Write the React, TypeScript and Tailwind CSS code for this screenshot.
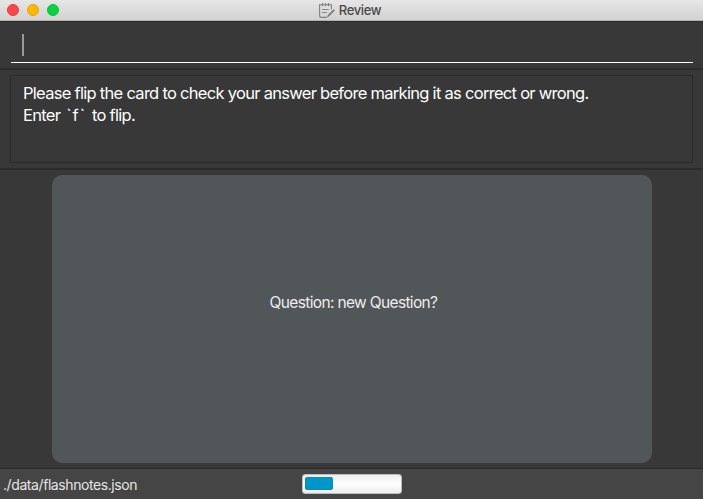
function NotepadIcon() {
  return (
    <svg
      className="h-[17px] w-[17px] shrink-0"
      viewBox="0 0 17 17"
      fill="none"
      stroke="#808080"
      strokeWidth="1.1"
    >
      <path d="M8.8 15.4H3.2C2 15.4 1.6 14.8 1.6 13.7V2.8H13.4V7.5" />
      <path d="M4.5 1V4.2M7.5 1V4.2M10.5 1V4.2" />
      <path d="M4 7.5H10.8M4 10.5H9" strokeWidth="0.9" />
      <path d="M15.7 7.6L10.2 13.1L9.4 14.9L11.2 14L16.4 8.6Z" fill="#808080" strokeWidth="0.8" />
    </svg>
  );
}

function TitleBar() {
  return (
    <header className="relative flex h-[21px] shrink-0 items-center justify-center border-b border-[#b3b3b3] bg-linear-to-b from-[#e6e6e6] to-[#d2d2d2]">
      <div className="absolute top-1 left-[7px] flex gap-2">
        <span className="size-3 rounded-full border border-[#e5383d] bg-[#fd4648]" />
        <span className="size-3 rounded-full border border-[#e5a210] bg-[#fdb803]" />
        <span className="size-3 rounded-full border border-[#0fbd35] bg-[#04d442]" />
      </div>
      <div className="flex items-center gap-1 pr-1">
        <NotepadIcon />
        <span className="text-[13px] leading-5 font-medium tracking-[-0.35px] text-[#484848]">Review</span>
      </div>
    </header>
  );
}

function CommandBox() {
  return (
    <section className="h-[49px] shrink-0 border-t border-b-2 border-t-[#2c2c2c] border-b-[#2b2b2b] pr-[10px] pl-[11px]">
      <div className="h-[41px] border-b border-white pt-3 pl-[11px]">
        <div className="h-[22px] w-[2px] bg-[#999999]" />
      </div>
    </section>
  );
}

function ResultDisplay() {
  return (
    <section className="h-[100px] shrink-0 border-b-2 border-[#2b2b2b] px-[10px] pt-[5px]">
      <div className="h-[88px] border border-[#2b2b2b] pt-[6px] pl-3 text-[16.5px] leading-[22px] tracking-[-0.71px] whitespace-nowrap text-white">
        <p>Please flip the card to check your answer before marking it as correct or wrong.</p>
        <p>
          Enter <span className="pl-0.5 tracking-[1.1px]">`f` </span>to flip.
        </p>
      </div>
    </section>
  );
}

function StatusBar() {
  return (
    <footer className="grid h-[31px] shrink-0 grid-cols-[302px_100px_1fr] border-t border-[#292929] bg-[#454545]">
      <span className="pt-[6px] pl-[3px] text-[14px] leading-5 tracking-[-0.42px] text-[#e6e6e6]">
        ./data/flashnotes.json
      </span>
      <div className="mt-[5px] h-5 rounded-[3px] border border-[#bdbdbd] bg-linear-to-b from-[#ededed] via-white to-[#ececec] p-[2px]">
        <div className="h-[13px] w-7 rounded-[2px] border border-[#078bbb] bg-[#0096c9]" />
      </div>
    </footer>
  );
}

export default function App() {
  return (
    <div className="flex h-[499px] w-[703px] flex-col overflow-hidden bg-[#383838] font-['Inter',sans-serif]">
      <TitleBar />
      <CommandBox />
      <ResultDisplay />
      <main className="flex flex-1 justify-center pt-[5px] pb-[5px]">
        <div className="flex w-[600px] justify-center rounded-[10px] bg-[#515658] pt-[117px] pl-1">
          <p className="text-[15.5px] leading-[22px] tracking-[-0.65px] text-[#ededed]">Question: new Question?</p>
        </div>
      </main>
      <StatusBar />
    </div>
  );
}
